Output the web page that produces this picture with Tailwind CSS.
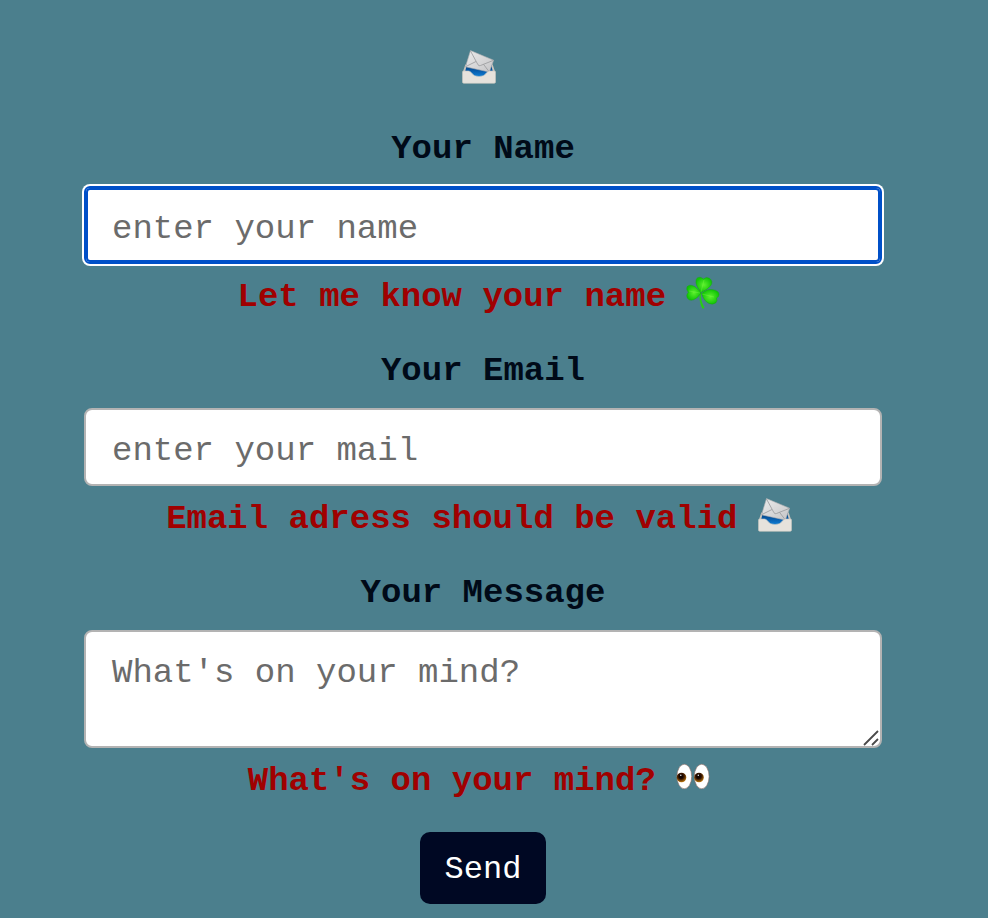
<!DOCTYPE html>
<html lang="en">
<head>
<meta charset="utf-8">
<meta name="viewport" content="width=device-width, initial-scale=1">
<title>Contact</title>
<script src="https://cdn.jsdelivr.net/npm/@tailwindcss/browser@4"></script>
</head>
<body class="min-h-screen bg-[#4b7f8d] font-['Courier_New','Liberation_Mono',monospace] text-[34px] leading-[38px] text-[#000a18]">
<svg class="absolute size-0" aria-hidden="true">
  <defs>
    <linearGradient id="paper" x1="0" y1="0" x2="1" y2="1"><stop offset="0" stop-color="#ececec"/><stop offset="1" stop-color="#c4c4c6"/></linearGradient>
    <linearGradient id="blue" x1="0" y1="0" x2="0" y2="1"><stop offset="0" stop-color="#063a72"/><stop offset=".5" stop-color="#075cab"/><stop offset="1" stop-color="#1287e0"/></linearGradient>
    <radialGradient id="leaf"><stop offset="0" stop-color="#5cf02c"/><stop offset="1" stop-color="#12c408"/></radialGradient>
    <radialGradient id="iris" cx=".45" cy=".35" r=".65"><stop offset="0" stop-color="#1c0800"/><stop offset=".5" stop-color="#3a1700"/><stop offset="1" stop-color="#c07a10"/></radialGradient>
    <symbol id="mail" viewBox="0 0 34 34">
      <path d="M4 14h26l2 8v6H2v-6z" fill="url(#blue)"/>
      <path d="M3.500 14 1 21.500h2.200L4.500 16zM30.500 14 33 21.500h-2.200L29.500 16z" fill="#c9c5be"/>
      <path d="M8.500.6 31.600 10.200 27.300 22 3.500 16.800z" fill="url(#paper)" stroke="#b0b0b2" stroke-width=".6"/>
      <path d="M8.500 1 16 14.800q1 1.400 2.500.7L31.300 10.400M3.700 16.600 14 11.500M27.100 21.700 21.500 14.300" fill="none" stroke="#98999c" stroke-width=".8"/>
      <path d="M.5 22Q.5 21 1.500 21H6.500q2 0 3.500 2.500 2 3 7 3t7-3q1.500-2.500 3.500-2.500h5q1 0 1 1V32q0 1.300-1.300 1.300H1.800Q.5 33.300.5 32z" fill="#e6e2dc" stroke="#cbc7c0" stroke-width=".6"/>
    </symbol>
    <symbol id="clover" viewBox="0 0 34 34">
      <path d="M15 17q-.5 8 3.500 15l-2 .8Q12.500 26 13.800 17z" fill="#27cf12"/>
      <g fill="url(#leaf)" stroke="#11a609" stroke-width=".4">
        <path d="M15 16.500Q9 9 10 4q1-3.500 5-2.500l2.500 1.500Q20 .3 23.500 2.300q3.800 3 1.500 7Q22.500 13 15 16.500z"/>
        <path d="M15 17Q9 8.500 3.500 9.300.2 10 .8 13.500l1.500 3Q-.3 19 1.300 22q2 3.200 6.200 1.800Q12 22 15 17z"/>
        <path d="M15.500 17.500Q21 12.500 27 13.700q6 1 6 4.800 0 2.300-2.500 3.500 1.500 2.500-.5 4.700-3 2.500-7 .8Q18 25.300 15.500 17.500z"/>
      </g>
      <path d="M15 16 18 4M14 17 3 15M16 18l12 3" fill="none" stroke="#8cff55" stroke-width=".6" opacity=".5"/>
    </symbol>
    <symbol id="eyes" viewBox="0 0 34 34">
      <g fill="#fff" stroke="#8a6a62" stroke-width=".6">
        <ellipse cx="8.300" cy="16.500" rx="7.400" ry="12.300"/>
        <ellipse cx="25.700" cy="16.500" rx="7.400" ry="12.300"/>
      </g>
      <circle cx="5.500" cy="17.500" r="4.800" fill="url(#iris)"/><circle cx="23" cy="17.500" r="4.800" fill="url(#iris)"/>
      <circle cx="5" cy="16.500" r="2.200" fill="#140500"/><circle cx="22.400" cy="16.500" r="2.200" fill="#140500"/>
      <circle cx="4.800" cy="15.200" r=".7" fill="#fff"/><circle cx="22.300" cy="15.200" r=".7" fill="#fff"/>
    </symbol>
  </defs>
</svg>
<main class="pt-[50px] pr-[106px] pb-3 pl-[84px]">
  <form class="flex flex-col items-center" novalidate>
    <svg class="mr-2 size-[34px]" role="img" aria-label="Mail"><use href="#mail"/></svg>

    <label for="name" class="mt-[46px] font-bold">Your Name</label>
    <input id="name" type="text" placeholder="enter your name" aria-describedby="name-error" class="mt-[18px] w-full rounded-md border-2 border-[#0050c8] bg-white px-[26px] pt-[22px] pb-[14px] shadow-[0_0_0_2px_white,inset_0_0_0_2px_#0050c8] outline-none placeholder:text-[#6b6b6b]">
    <p id="name-error" class="mt-[14px] flex font-bold text-[#a00000]">Let me know your name&nbsp;<svg class="-mt-0.5 mr-2 size-[34px]" aria-hidden="true"><use href="#clover"/></svg></p>

    <label for="email" class="mt-9 font-bold">Your Email</label>
    <input id="email" type="email" placeholder="enter your mail" aria-describedby="email-error" class="mt-[18px] w-full rounded-lg border-2 border-[#b3b3b3] bg-white px-[26px] pt-[22px] pb-[14px] placeholder:text-[#6b6b6b]">
    <p id="email-error" class="mt-[14px] flex font-bold text-[#a00000]">Email adress should be valid&nbsp;<svg class="-mt-0.5 mr-2 size-[34px]" aria-hidden="true"><use href="#mail"/></svg></p>

    <label for="message" class="mt-9 font-bold">Your Message</label>
    <div class="relative mt-[18px] w-full">
      <textarea id="message" placeholder="What's on your mind?" aria-describedby="message-error" class="block h-[118px] w-full resize-none rounded-lg border-2 border-[#b3b3b3] bg-white px-[26px] pt-[22px] pb-[14px] placeholder:text-[#6b6b6b]"></textarea>
      <svg class="pointer-events-none absolute right-[3px] bottom-[2px] size-4" viewBox="0 0 16 16" fill="none" stroke="#4a4a4a" stroke-width="1.800" aria-hidden="true"><path d="M1 15 15 1M9 15l6-6"/></svg>
    </div>
    <p id="message-error" class="mt-[14px] flex font-bold text-[#a00000]">What's on your mind?&nbsp;<svg class="-mt-0.5 mr-2 size-[34px]" aria-hidden="true"><use href="#eyes"/></svg></p>

    <button type="submit" class="mt-8 rounded-[10px] bg-[#000823] px-[25px] pt-[19px] pb-[15px] text-[32px] text-white">Send</button>
  </form>
</main>
</body>
</html>
